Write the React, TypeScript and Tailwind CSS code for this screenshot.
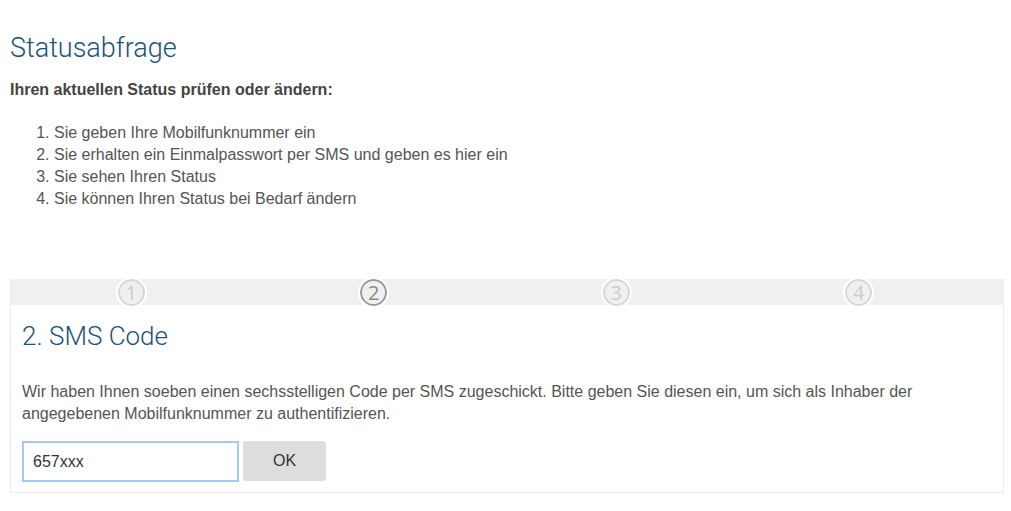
export default function App() {
  const steps = [1, 2, 3, 4];
  const active = 2;

  return (
    <div className="min-h-[511px] bg-white px-[10px] pt-[30px] text-[#555] [font-family:Arial,'Liberation_Sans',sans-serif]">
      <h1 className="text-[27px] font-light leading-[36px] text-[#1b5278] [font-family:Roboto,sans-serif]">
        Statusabfrage
      </h1>
      <p className="mt-[13px] text-[16px] font-bold leading-[22px] text-[#444]">
        Ihren aktuellen Status prüfen oder ändern:
      </p>

      <ol className="mt-[21px] list-decimal pl-[44px] text-[16px] leading-[22px]">
        <li>Sie geben Ihre Mobilfunknummer ein</li>
        <li>Sie erhalten ein Einmalpasswort per SMS und geben es hier ein</li>
        <li>Sie sehen Ihren Status</li>
        <li>Sie können Ihren Status bei Bedarf ändern</li>
      </ol>

      <div className="mt-[69px] w-[994px]">
        <div className="h-[26px] bg-[#f0f0f0]">
          <div className="grid w-[970px] grid-cols-4">
            {steps.map(s => (
              <div key={s} className="flex justify-center">
                <span
                  className={`-mt-[2px] flex h-[31px] w-[31px] items-center justify-center rounded-full border-[2px] border-white text-[20px] leading-none [font-family:'Open_Sans',sans-serif] ${
                    s === active ? 'text-[#888] ring-2 ring-[#999] ring-inset' : 'text-[#ccc] ring-2 ring-[#d6d6d6] ring-inset'
                  }`}
                >
                  {s}
                </span>
              </div>
            ))}
          </div>
        </div>

        <div className="border border-t-0 border-[#ececec] px-[11px] pb-[10px]">
          <h2 className="pt-[14px] text-[26px] font-light leading-[34px] text-[#1b5278] [font-family:Roboto,sans-serif]">
            2. SMS Code
          </h2>
          <p className="mt-[28px] text-[16px] leading-[22px]">
            Wir haben Ihnen soeben einen sechsstelligen Code per SMS zugeschickt. Bitte geben Sie diesen ein, um sich als Inhaber der
            <br />
            angegebenen Mobilfunknummer zu authentifizieren.
          </p>
          <div className="mt-[16px] flex items-start gap-[4px]">
            <input
              type="text"
              defaultValue="657xxx"
              className="h-[41px] w-[217px] border-2 border-[#a8c8ee] px-[9px] text-[16px] text-[#333] outline-none"
            />
            <button className="h-[40px] w-[83px] rounded-[3px] bg-[#dddddd] text-[16px] text-[#333]">
              OK
            </button>
          </div>
        </div>
      </div>
    </div>
  );
}
